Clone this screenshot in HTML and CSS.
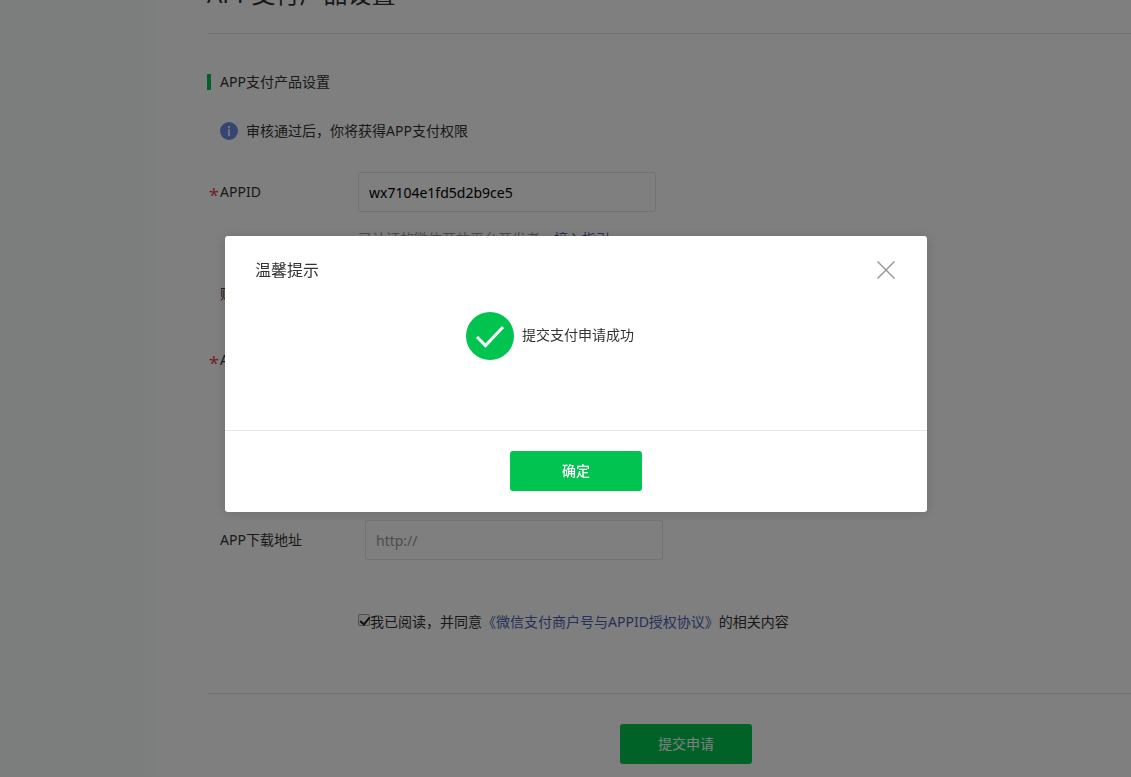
FILE: index.html
```html
<!doctype html>
<html lang="zh-CN">
  <head>
    <meta charset="utf-8">
    <title>APP支付产品设置</title>
    <link rel="stylesheet" href="styles.css">
  </head>
  <body>

    <div class="page">
      <div class="sidebar"></div>

      <div class="main">
        <h1>APP支付产品设置</h1>

        <form class="form" method="post" action="#">
          <h2>APP支付产品设置</h2>

          <p class="tips">
            <svg viewBox="0 0 18 18" width="18" height="18" aria-hidden="true">
              <circle cx="9" cy="9" r="9" fill="#6a8fe0"/>
              <rect x="8" y="4" width="2" height="2" fill="#dde6fa"/>
              <rect x="8" y="7" width="2" height="7" fill="#dde6fa"/>
            </svg>
            审核通过后，你将获得APP支付权限
          </p>

          <div class="row">
            <label class="name required" for="appid">APPID</label>
            <div class="field">
              <input class="text" type="text" id="appid" value="wx7104e1fd5d2b9ce5">
              <p class="help">已认证的微信开放平台开发者，<a href="#">接入指引</a></p>
            </div>
          </div>

          <div class="row row-account">
            <span class="name">账号名称</span>
          </div>

          <div class="row row-app">
            <span class="name required">APP名称</span>
          </div>

          <div class="row">
            <label class="name" for="url">APP下载地址</label>
            <div class="field field-url">
              <input class="text" type="text" id="url" placeholder="http://">
            </div>
          </div>

          <div class="agree">
            <input type="checkbox" id="agree" checked>
            <label for="agree">我已阅读，并同意<a href="#">《微信支付商户号与APPID授权协议》</a>的相关内容</label>
          </div>

          <div class="submit">
            <button class="btn" type="submit">提交申请</button>
          </div>
        </form>
      </div>
    </div>

    <div class="mask">
      <div class="dialog" role="dialog" aria-labelledby="dialog-title">
        <div class="dialog-hd">
          <h3 id="dialog-title">温馨提示</h3>
          <button class="close" type="button" aria-label="关闭">
            <svg viewBox="0 0 18 18" width="18" height="18">
              <path d="M0.5 0.5L17.5 17.5M17.5 0.5L0.5 17.5" stroke="#999" stroke-width="1.5" fill="none"/>
            </svg>
          </button>
        </div>
        <div class="dialog-bd">
          <svg viewBox="0 0 48 48" width="48" height="48" aria-hidden="true">
            <circle cx="24" cy="24" r="24" fill="#00c44f"/>
            <path d="M11 25L19.500 33.500L37 15" stroke="#fff" stroke-width="3" fill="none"/>
          </svg>
          <p>提交支付申请成功</p>
        </div>
        <div class="dialog-ft">
          <button class="btn btn-ok" type="button">确定</button>
        </div>
      </div>
    </div>

  </body>
</html>
```

FILE: styles.css
```css
* {
  box-sizing: border-box;
}

body {
  background: #fff;
  color: #333;
  font: 14px/20px "Noto Sans", "Noto Sans CJK SC", sans-serif;
  margin: 0;
  overflow: hidden;
}

h1, h2, h3, p {
  font-weight: inherit;
  margin: 0;
}

a {
  color: #4a63b0;
  text-decoration: none;
}

.page {
  display: flex;
  min-height: 100vh;
}
.sidebar {
  background: linear-gradient(to right, #f9fdfb 80%, #fff);
  flex: 0 0 177px;
}
.main {
  flex: 1 0 auto;
  margin-top: -24px;
  min-width: 988px;
  padding-left: 30px;
}

h1 {
  border-bottom: 1px solid #e7e7eb;
  font-size: 24px;
  line-height: 36px;
  padding-bottom: 21px;
}

h2 {
  border-left: 4px solid #00c44f;
  font-size: 14px;
  line-height: 16px;
  margin: 40px 0 31px;
  padding-left: 9px;
}

.tips {
  align-items: center;
  display: flex;
  gap: 8px;
  margin: 0 13px 31px;
}

.row {
  display: flex;
  padding-left: 13px;
}
.name {
  flex: 0 0 138px;
  line-height: 40px;
  position: relative;
}
.required::before {
  color: #e6454a;
  content: "*";
  font-size: 18px;
  left: -11px;
  position: absolute;
  top: 3px;
}
.row-account {
  padding-top: 25px;
}
.row-app {
  padding-bottom: 140px;
  padding-top: 26px;
}
.field-url {
  margin-left: 7px;
}

.text {
  background: #fff;
  border: 1px solid #e7e7eb;
  border-radius: 2px;
  color: #000;
  display: block;
  font: inherit;
  height: 40px;
  padding: 0 10px;
  width: 298px;
}
.text::placeholder {
  color: #999;
}
.help {
  color: #999;
  margin-top: 17px;
}

.agree {
  align-items: flex-start;
  display: flex;
  margin: 52px 0 0 151px;
}
.agree input {
  appearance: none;
  background: #f4f4f4;
  border: 1px solid #a0a0a0;
  border-radius: 2px;
  height: 12px;
  margin: 2px 0 0;
  position: relative;
  width: 12px;
}
.agree input:checked::after {
  border: solid #222;
  border-width: 0 2px 2px 0;
  content: "";
  height: 8px;
  left: 3px;
  position: absolute;
  top: 0;
  transform: rotate(40deg);
  width: 4px;
}

.submit {
  border-top: 1px solid #e7e7eb;
  margin-top: 61px;
  padding: 30px 0;
  text-align: center;
}

.btn {
  background: #00c44f;
  border: 0;
  border-radius: 3px;
  color: #fff;
  font: inherit;
  height: 40px;
  width: 132px;
}
.btn-ok {
  font-weight: 500;
}

.mask {
  align-items: flex-start;
  background: rgba(0, 0, 0, 0.5);
  display: flex;
  height: 100%;
  justify-content: center;
  left: 0;
  min-width: 1152px;
  padding-top: 236px;
  position: fixed;
  top: 0;
  width: 100%;
}

.dialog {
  background: #fff;
  border-radius: 3px;
  box-shadow: 0 1px 12px rgba(0, 0, 0, 0.15);
  width: 702px;
}
.dialog-hd {
  align-items: center;
  display: flex;
  justify-content: space-between;
  padding: 22px 32px 22px 30px;
}
.dialog-hd h3 {
  font-size: 16px;
  line-height: 24px;
}
.close {
  background: none;
  border: 0;
  height: 18px;
  padding: 0;
  width: 18px;
}
.close svg {
  display: block;
}
.dialog-bd {
  align-items: flex-start;
  display: flex;
  gap: 8px;
  justify-content: center;
  min-height: 126px;
  padding: 8px 52px 70px 0;
}
.dialog-bd p {
  line-height: 46px;
}
.dialog-ft {
  border-top: 1px solid #e7e7eb;
  padding: 20px 0 21px;
  text-align: center;
}
```
